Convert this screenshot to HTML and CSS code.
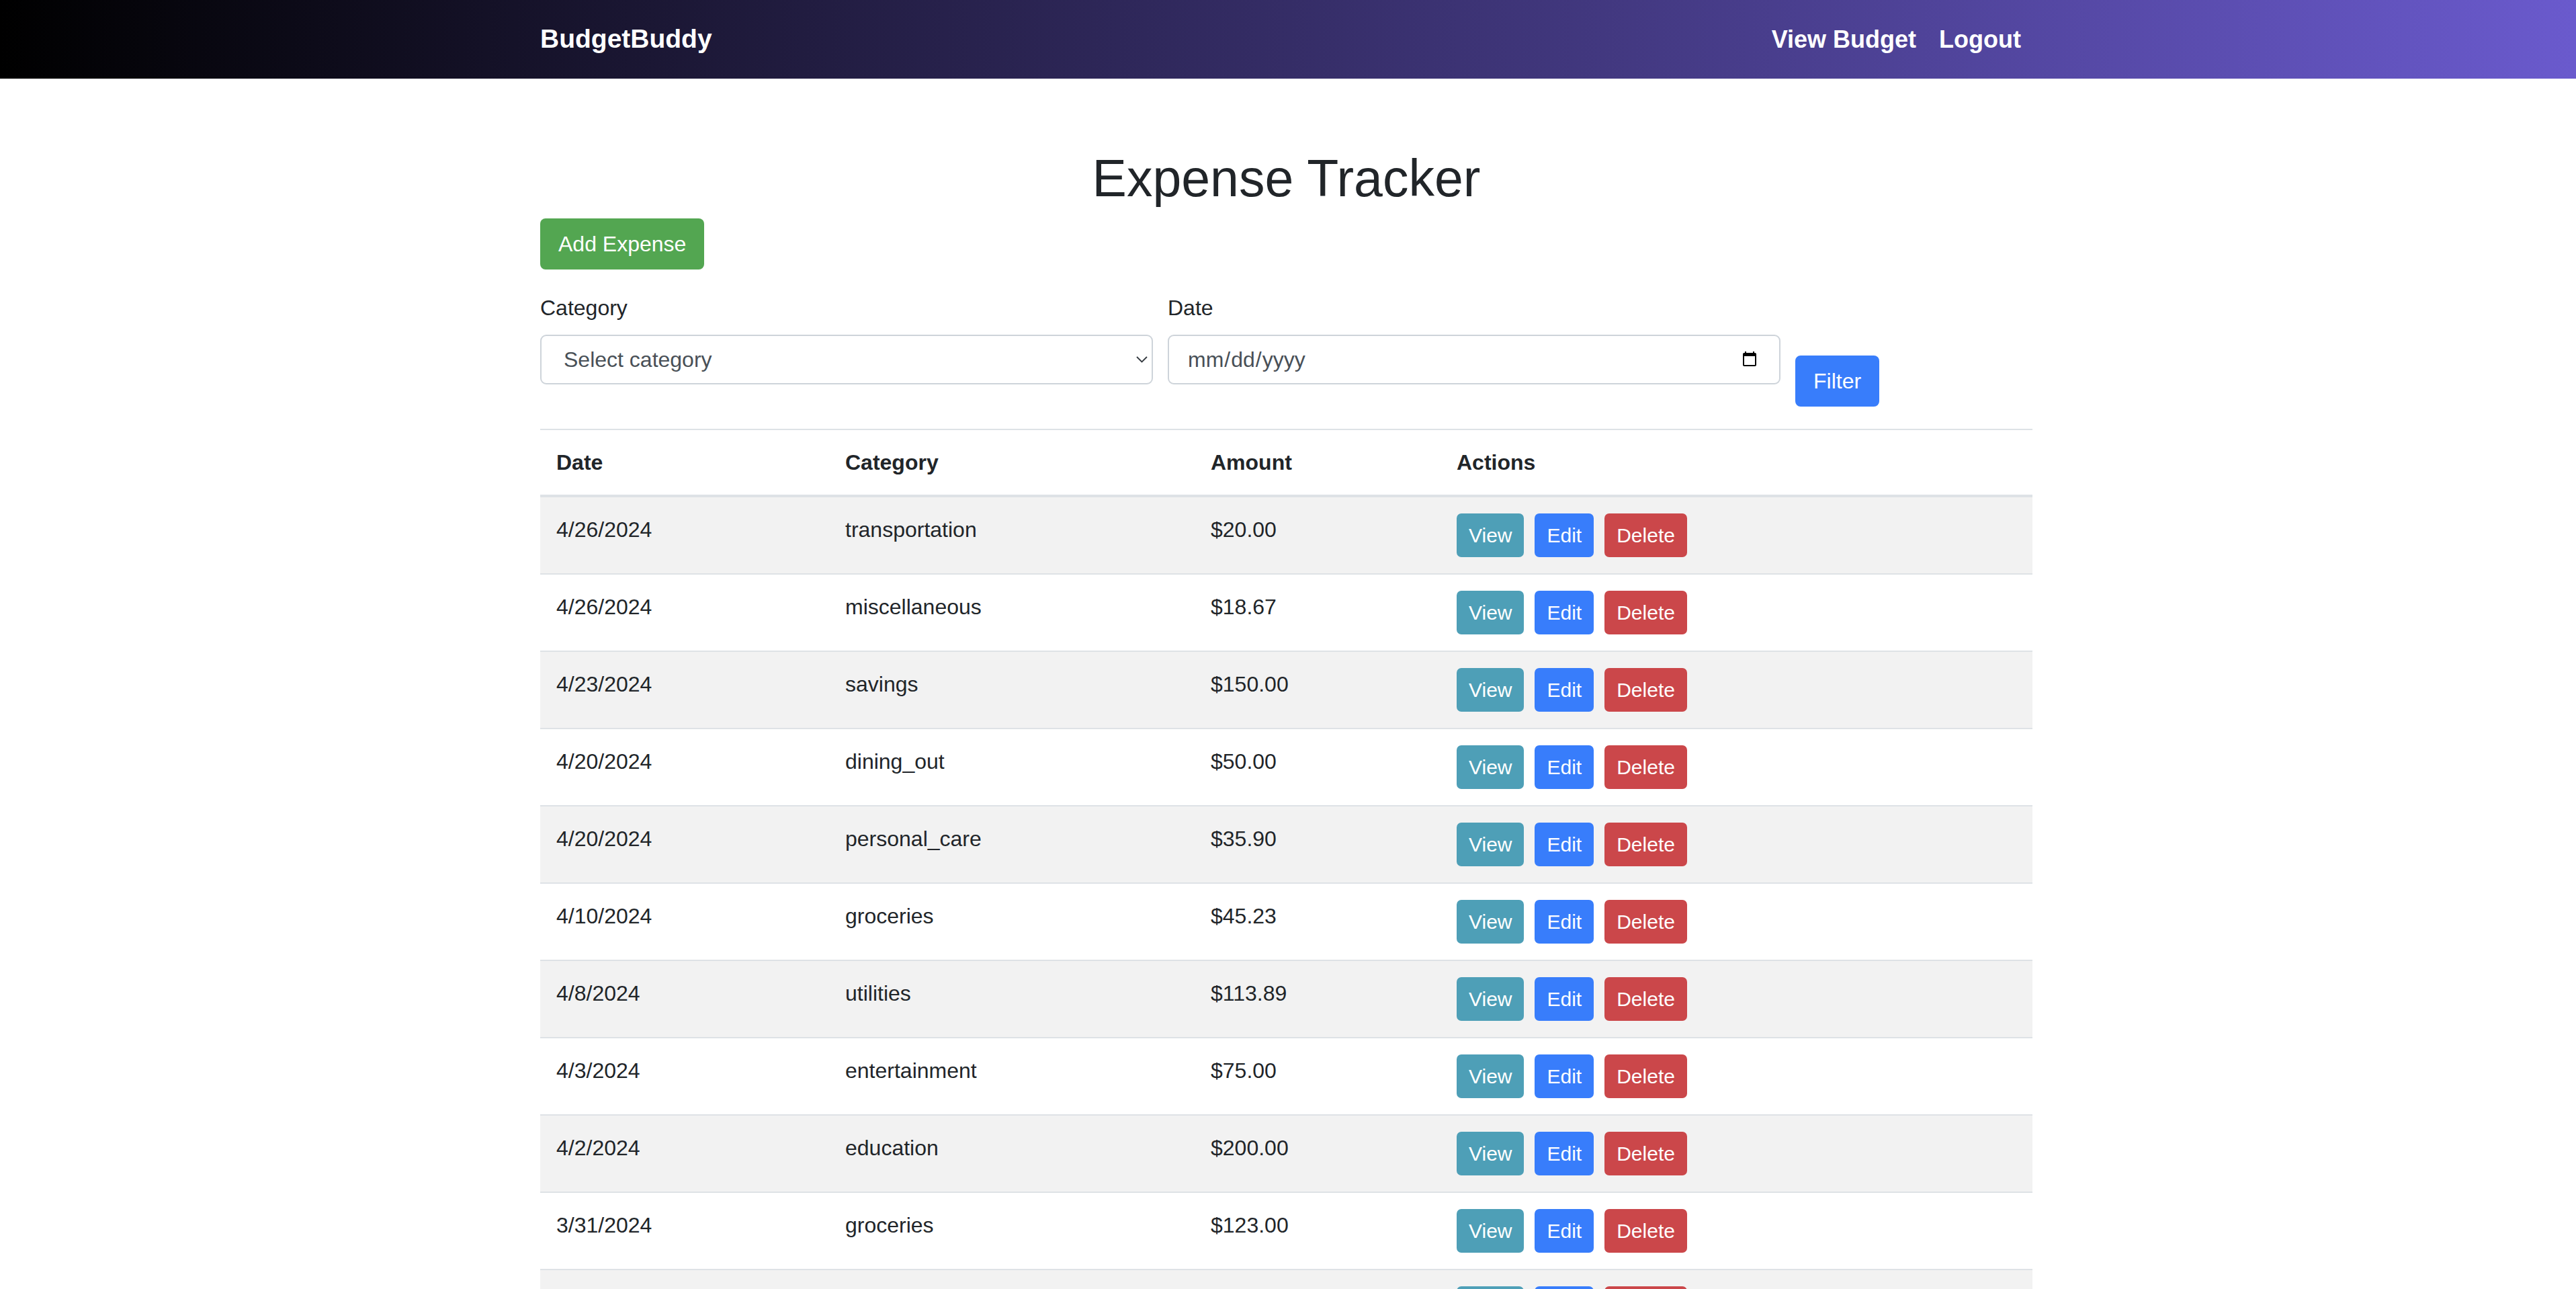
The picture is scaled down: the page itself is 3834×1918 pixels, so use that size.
FILE: index.html
```html
<!DOCTYPE html>
<html lang="en">
<head>
<meta charset="utf-8">
<title>BudgetBuddy – Expense Tracker</title>
<link rel="stylesheet" href="styles.css">
</head>
<body>
<nav class="navbar">
  <div class="nav-inner">
    <a class="brand" href="#">BudgetBuddy</a>
    <div class="nav-links">
      <a class="nav-link" href="#">View Budget</a>
      <a class="nav-link" href="#">Logout</a>
    </div>
  </div>
</nav>

<main class="page">
  <h1 class="title">Expense Tracker</h1>
  <button class="btn btn-add" type="button">Add Expense</button>

  <form class="filter">
    <div class="field">
      <label class="field-label" for="category">Category</label>
      <div class="select-wrap">
        <select class="control control-select" id="category">
          <option>Select category</option>
          <option>groceries</option>
          <option>utilities</option>
          <option>transportation</option>
        </select>
        <svg class="chevron" width="17" height="10" viewBox="0 0 17 10"><path d="M1 1 L8.5 8.5 L16 1" fill="none" stroke="#343a40" stroke-width="1.8"/></svg>
      </div>
    </div>
    <div class="field">
      <label class="field-label" for="date">Date</label>
      <input class="control control-date" id="date" type="date">
    </div>
    <button class="btn btn-filter" type="button">Filter</button>
  </form>

  <table class="expenses">
    <colgroup>
      <col class="col-date">
      <col class="col-category">
      <col class="col-amount">
      <col>
    </colgroup>
    <thead>
      <tr><th>Date</th><th>Category</th><th>Amount</th><th>Actions</th></tr>
    </thead>
    <tbody>
      <tr><td>4/26/2024</td><td>transportation</td><td>$20.00</td><td><div class="actions"><button class="btn btn-sm btn-view">View</button><button class="btn btn-sm btn-edit">Edit</button><button class="btn btn-sm btn-delete">Delete</button></div></td></tr>
      <tr><td>4/26/2024</td><td>miscellaneous</td><td>$18.67</td><td><div class="actions"><button class="btn btn-sm btn-view">View</button><button class="btn btn-sm btn-edit">Edit</button><button class="btn btn-sm btn-delete">Delete</button></div></td></tr>
      <tr><td>4/23/2024</td><td>savings</td><td>$150.00</td><td><div class="actions"><button class="btn btn-sm btn-view">View</button><button class="btn btn-sm btn-edit">Edit</button><button class="btn btn-sm btn-delete">Delete</button></div></td></tr>
      <tr><td>4/20/2024</td><td>dining_out</td><td>$50.00</td><td><div class="actions"><button class="btn btn-sm btn-view">View</button><button class="btn btn-sm btn-edit">Edit</button><button class="btn btn-sm btn-delete">Delete</button></div></td></tr>
      <tr><td>4/20/2024</td><td>personal_care</td><td>$35.90</td><td><div class="actions"><button class="btn btn-sm btn-view">View</button><button class="btn btn-sm btn-edit">Edit</button><button class="btn btn-sm btn-delete">Delete</button></div></td></tr>
      <tr><td>4/10/2024</td><td>groceries</td><td>$45.23</td><td><div class="actions"><button class="btn btn-sm btn-view">View</button><button class="btn btn-sm btn-edit">Edit</button><button class="btn btn-sm btn-delete">Delete</button></div></td></tr>
      <tr><td>4/8/2024</td><td>utilities</td><td>$113.89</td><td><div class="actions"><button class="btn btn-sm btn-view">View</button><button class="btn btn-sm btn-edit">Edit</button><button class="btn btn-sm btn-delete">Delete</button></div></td></tr>
      <tr><td>4/3/2024</td><td>entertainment</td><td>$75.00</td><td><div class="actions"><button class="btn btn-sm btn-view">View</button><button class="btn btn-sm btn-edit">Edit</button><button class="btn btn-sm btn-delete">Delete</button></div></td></tr>
      <tr><td>4/2/2024</td><td>education</td><td>$200.00</td><td><div class="actions"><button class="btn btn-sm btn-view">View</button><button class="btn btn-sm btn-edit">Edit</button><button class="btn btn-sm btn-delete">Delete</button></div></td></tr>
      <tr><td>3/31/2024</td><td>groceries</td><td>$123.00</td><td><div class="actions"><button class="btn btn-sm btn-view">View</button><button class="btn btn-sm btn-edit">Edit</button><button class="btn btn-sm btn-delete">Delete</button></div></td></tr>
      <tr><td>3/28/2024</td><td>utilities</td><td>$64.50</td><td><div class="actions"><button class="btn btn-sm btn-view">View</button><button class="btn btn-sm btn-edit">Edit</button><button class="btn btn-sm btn-delete">Delete</button></div></td></tr>
    </tbody>
  </table>
</main>
</body>
</html>
```

FILE: styles.css
```css
html, body {
  margin: 0;
  padding: 0;
}

body {
  font-family: "Liberation Sans", Arial, sans-serif;
  color: #212529;
  background: #ffffff;
}

/* ---------- navbar ---------- */
.navbar {
  height: 117px;
  background: linear-gradient(to right, #000000, #6a5acd);
}

.nav-inner {
  width: 2221px;
  height: 100%;
  margin-left: calc(50% - 1113px);
  display: flex;
  align-items: center;
  justify-content: space-between;
}

.brand {
  color: #ffffff;
  font-size: 39px;
  font-weight: 700;
  line-height: 1.5;
  text-decoration: none;
}

.nav-links {
  display: flex;
}

.nav-link {
  color: #ffffff;
  font-size: 36px;
  font-weight: 700;
  line-height: 1.5;
  padding: 0 17px;
  text-decoration: none;
}

/* ---------- page ---------- */
.page {
  width: 2221px;
  margin-left: calc(50% - 1113px);
  padding-top: 102px;
}

.title {
  margin: 0 0 14px;
  font-size: 77px;
  font-weight: 500;
  line-height: 1.2;
  text-align: center;
  color: #212529;
}

.btn {
  border: none;
  color: #ffffff;
  font-family: inherit;
  cursor: pointer;
}

.btn-add,
.btn-filter {
  font-size: 32px;
  line-height: 48px;
  padding: 14px 27px;
  border-radius: 8px;
}

.btn-add {
  background: #53a651;
}

.btn-filter {
  background: #387dfb;
  margin-top: 95px;
}

/* ---------- filter form ---------- */
.filter {
  display: flex;
  align-items: flex-start;
  gap: 22px;
  margin-top: 33px;
}

.field {
  width: 912px;
}

.field-label {
  display: block;
  font-size: 32px;
  line-height: 48px;
  margin-bottom: 16px;
}

.select-wrap {
  position: relative;
}

.control {
  display: block;
  box-sizing: border-box;
  width: 100%;
  height: 74px;
  margin: 0;
  border: 2px solid #ced4da;
  border-radius: 9px;
  background: #ffffff;
  color: #495057;
  font-family: inherit;
  font-size: 32px;
}

.control-select {
  -webkit-appearance: none;
  appearance: none;
  padding: 0 40px 0 33px;
}

.chevron {
  position: absolute;
  right: 8px;
  top: 32px;
  pointer-events: none;
}

.control-date {
  padding: 0 31px 0 27px;
}

.control-date::-webkit-calendar-picker-indicator {
  width: 26px;
  height: 26px;
  padding: 0;
  margin: 0;
}

/* ---------- table ---------- */
.expenses {
  width: 100%;
  margin-top: 33px;
  border-collapse: collapse;
  table-layout: fixed;
  border-top: 2px solid #dee2e6;
}

.col-date { width: 430px; }
.col-category { width: 544px; }
.col-amount { width: 366px; }

.expenses th,
.expenses td {
  padding: 24px;
  font-size: 32px;
  line-height: 48px;
  text-align: left;
  vertical-align: top;
}

.expenses th {
  font-weight: 700;
  border-bottom: 4px solid #dee2e6;
}

.expenses tbody tr {
  border-bottom: 2px solid #dee2e6;
}

.expenses tbody tr:nth-child(odd) {
  background: #f2f2f2;
}

.actions {
  display: flex;
  gap: 16px;
}

.btn-sm {
  font-size: 30px;
  line-height: 45px;
  padding: 10px 18px;
  border-radius: 7px;
}

.btn-view { background: #4e9fb7; }
.btn-edit { background: #387dfb; }
.btn-delete { background: #cb474a; }
```
